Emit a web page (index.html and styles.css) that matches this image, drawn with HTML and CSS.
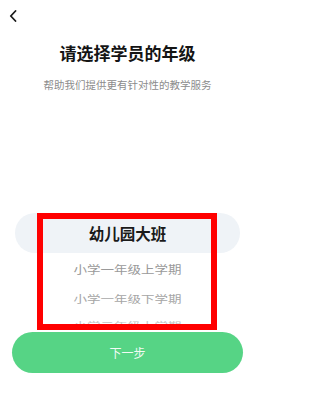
FILE: index.html
```html
<!DOCTYPE html>
<html lang="zh-CN">
<head>
<meta charset="utf-8">
<link rel="stylesheet" href="styles.css">
</head>
<body>
<div class="page">
  <div class="header">
    <svg class="back" width="8" height="12" viewBox="0 0 8 12"><path d="M6.5 1 L1.8 6 L6.5 11" fill="none" stroke="#1a1a1a" stroke-width="1.8" stroke-linecap="round" stroke-linejoin="round"/></svg>
  </div>
  <h1 class="title">请选择学员的年级</h1>
  <p class="subtitle">帮助我们提供更有针对性的教学服务</p>
  <div class="picker">
    <div class="selected">幼儿园大班</div>
    <div class="item item1">小学一年级上学期</div>
    <div class="item item2">小学一年级下学期</div>
    <div class="item item3">小学二年级上学期</div>
    <div class="highlight"></div>
  </div>
  <div class="next">下一步</div>
</div>
</body>
</html>
```
FILE: styles.css
```css
html, body {
  margin: 0;
  padding: 0;
  background: #ffffff;
}
body {
  font-family: "Noto Sans CJK SC", "Noto Sans", sans-serif;
  width: 252px;
  height: 415px;
  overflow: hidden;
}
.page {
  padding: 0 9px 0 12px;
}
.header {
  height: 32px;
  box-sizing: border-box;
  padding-top: 10px;
  margin-left: -3px;
}
.back {
  display: block;
}
.title {
  margin: 8.5px 0 0;
  font-size: 17px;
  line-height: 24px;
  font-weight: 700;
  color: #141414;
  text-align: center;
}
.subtitle {
  margin: 13px 0 0;
  font-size: 10.5px;
  line-height: 14px;
  color: #8c8c8c;
  text-align: center;
}
.picker {
  position: relative;
  margin-top: 121.5px;
  height: 117px;
  overflow: hidden;
}
.selected {
  margin: 0 3px;
  height: 40px;
  border-radius: 20px;
  background: #eff3f7;
  display: flex;
  align-items: center;
  justify-content: center;
  font-size: 15.5px;
  font-weight: 700;
  color: #1a1a1a;
}
.item {
  display: flex;
  align-items: center;
  justify-content: center;
  font-size: 13.5px;
}
.item1 {
  height: 32px;
  color: #9a9a9a;
  transform: scaleY(0.85);
}
.item2 {
  height: 26px;
  color: #a6a6a6;
  transform: scaleY(0.75);
}
.item3 {
  height: 26px;
  color: #c4c4c4;
  transform: scaleY(0.6);
}
.highlight {
  position: absolute;
  left: 25px;
  top: 0;
  width: 180px;
  height: 117px;
  box-sizing: border-box;
  border: 6px solid #ff0000;
}
.next {
  margin-top: 2px;
  height: 41px;
  border-radius: 20.5px;
  background: #56d485;
  color: #f2fbf5;
  font-size: 12px;
  display: flex;
  align-items: center;
  justify-content: center;
}
```
